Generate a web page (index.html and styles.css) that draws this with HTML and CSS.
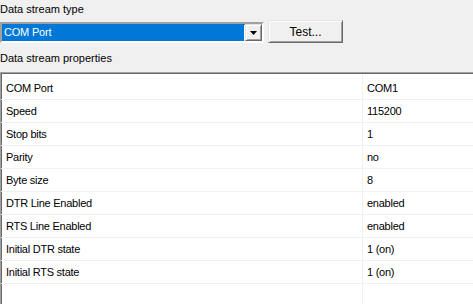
FILE: index.html
```html
<!DOCTYPE html>
<html lang="en">

<head>
  <meta charset="UTF-8">
  <meta name="viewport" content="width=device-width, initial-scale=1.0">
  <title>Data stream</title>
  <link rel="stylesheet" href="styles.css">
</head>

<body>
  <div class="caption first">Data stream type</div>
  <div class="stream">
    <div class="combo">
      <div class="combo-text">COM Port</div>
      <div class="combo-btn">
        <svg width="7" height="4" viewBox="0 0 7 4"><path d="M0 0h7L3.5 4z" fill="#000"/></svg>
      </div>
    </div>
    <button class="btn">Test...</button>
  </div>
  <div class="caption second">Data stream properties</div>
  <div class="props">
    <div class="row"><div class="name">COM Port</div><div class="value">COM1</div></div>
    <div class="row"><div class="name">Speed</div><div class="value">115200</div></div>
    <div class="row"><div class="name">Stop bits</div><div class="value">1</div></div>
    <div class="row"><div class="name">Parity</div><div class="value">no</div></div>
    <div class="row"><div class="name">Byte size</div><div class="value">8</div></div>
    <div class="row"><div class="name">DTR Line Enabled</div><div class="value">enabled</div></div>
    <div class="row"><div class="name">RTS Line Enabled</div><div class="value">enabled</div></div>
    <div class="row"><div class="name">Initial DTR state</div><div class="value">1 (on)</div></div>
    <div class="row"><div class="name">Initial RTS state</div><div class="value">1 (on)</div></div>
  </div>
</body>

</html>
```

FILE: styles.css
```css
html,
body {
  margin: 0;
  height: 100%;
  overflow: hidden;
}

body {
  background-color: #f0f0f0;
  font-family: "Liberation Sans", Arial, sans-serif;
  font-size: 11px;
  color: #000;
}

.caption {
  line-height: 13px;
}

.first {
  padding-top: 3px;
}

.second {
  margin-top: 9px;
}

.stream {
  display: flex;
  align-items: flex-start;
  gap: 4px;
  margin-top: 4px;
}

.combo {
  margin-top: 2px;
  width: 260px;
  height: 17px;
  border: 2px solid;
  border-color: #a0a0a0 #fff #fff #a0a0a0;
  box-shadow: inset 1px 1px #696969, inset -1px -1px #e3e3e3;
  background-color: #fff;
  display: flex;
}

.combo-text {
  flex: 1;
  margin: 0 1px 0 0;
  background-color: #0078d7;
  color: #fff;
  font-size: 11px;
  letter-spacing: -0.2px;
  line-height: 17px;
  padding-left: 2px;
}

.combo-btn {
  width: 15px;
  height: 15px;
  border: 1px solid;
  border-color: #e3e3e3 #696969 #696969 #e3e3e3;
  box-shadow: inset 1px 1px #fff, inset -1px -1px #a0a0a0;
  background-color: #f0f0f0;
  display: flex;
  align-items: center;
  justify-content: center;
}

.combo-btn svg {
  display: block;
  margin-top: 1px;
}

.btn {
  width: 75px;
  height: 23px;
  margin: 0;
  padding: 0;
  border: 1px solid;
  border-color: #e3e3e3 #696969 #696969 #e3e3e3;
  box-shadow: inset 1px 1px #fff, inset -1px -1px #a0a0a0;
  background-color: #f0f0f0;
  font-family: "Liberation Sans", Arial, sans-serif;
  font-size: 12px;
  color: #000;
}

.props {
  margin-top: 7px;
  height: 240px;
  padding-top: 4px;
  border-top: 1px solid #a0a0a0;
  border-left: 1px solid #a0a0a0;
  box-shadow: inset 1px 1px #696969;
  background: linear-gradient(#f0f0f0, #f0f0f0) no-repeat 361px 0 / 1px 100%, #fff;
  font-size: 11px;
  letter-spacing: -0.25px;
}

.row {
  display: flex;
  height: 22px;
  line-height: 22px;
  border-bottom: 1px solid #f0f0f0;
}

.name {
  width: 361px;
  padding-left: 5px;
  box-sizing: border-box;
}

.value {
  padding-left: 5px;
}
```
